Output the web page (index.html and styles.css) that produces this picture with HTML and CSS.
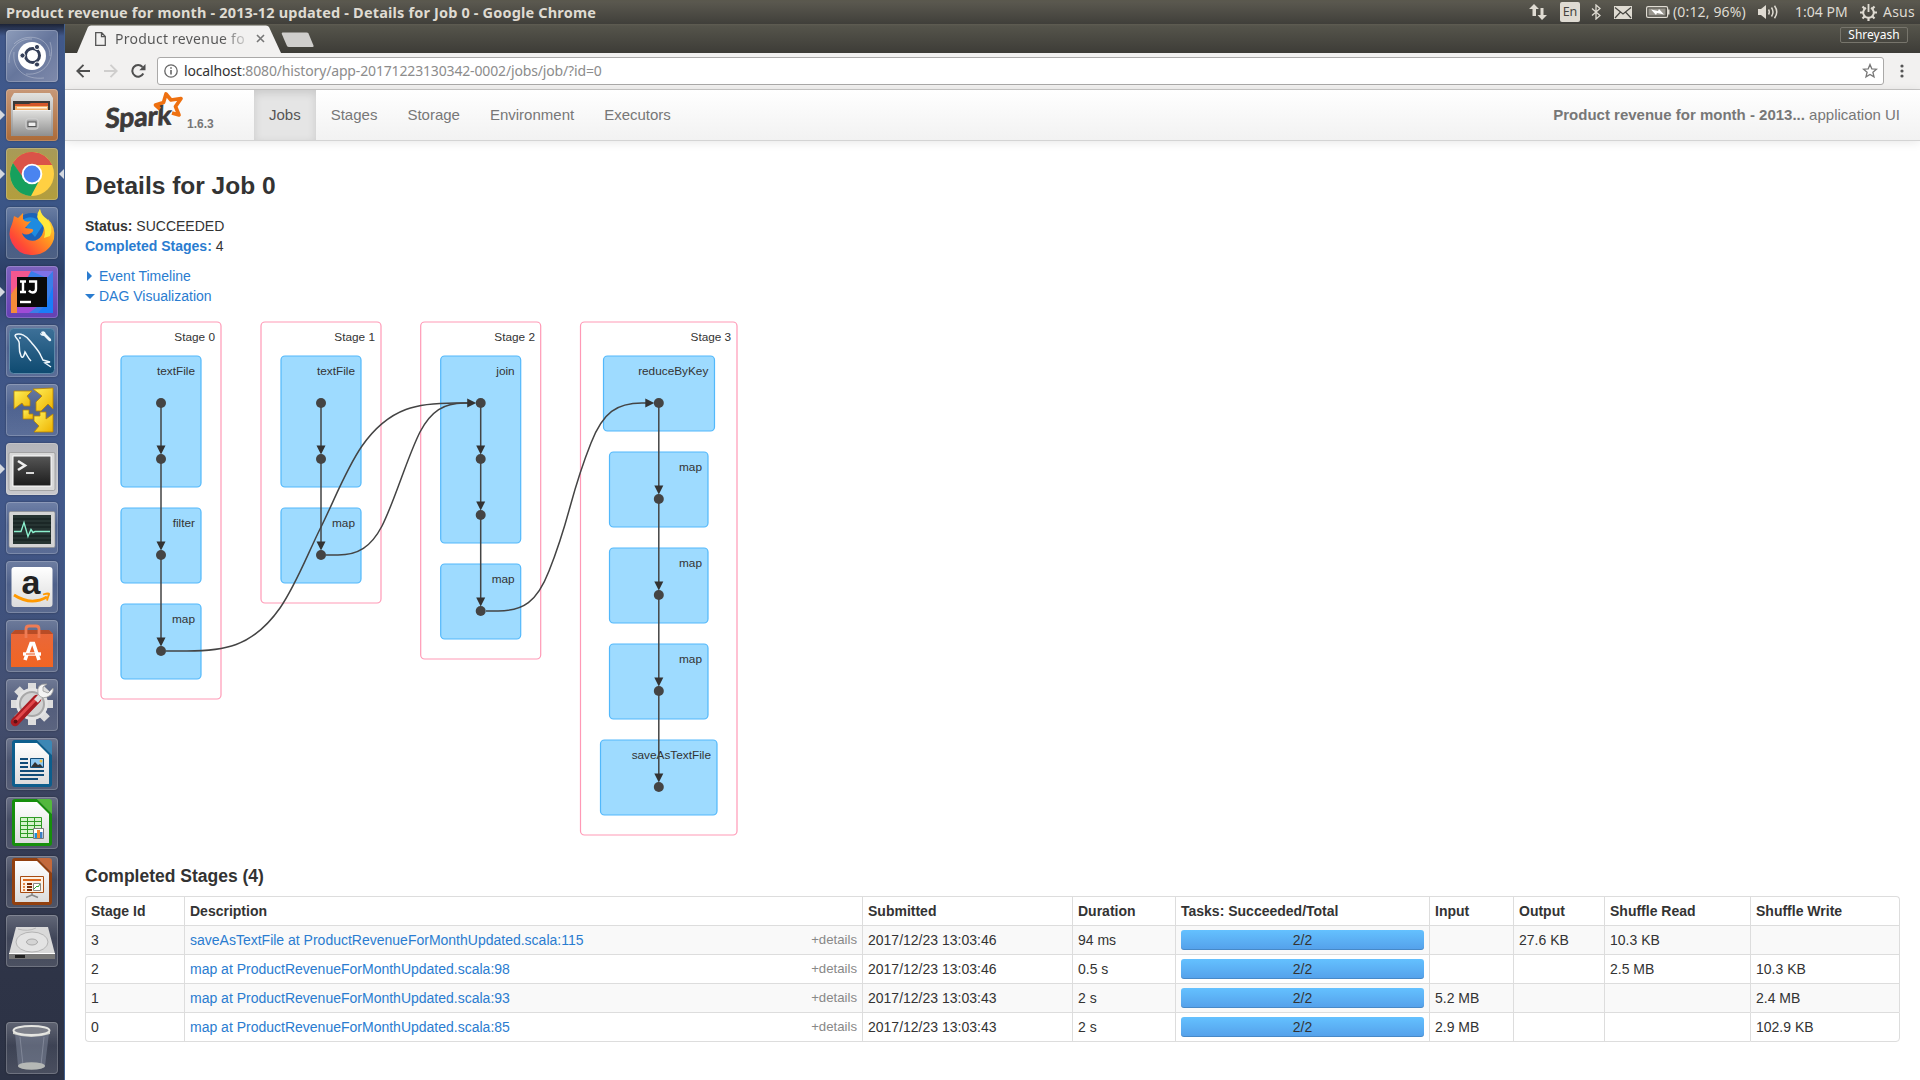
FILE: index.html
```html
<!DOCTYPE html>
<html lang="en">
<head>
<meta charset="utf-8">
<title>Product revenue for month - 2013-12 updated - Details for Job 0</title>
<link rel="stylesheet" href="styles.css">
</head>
<body>
<div class="desktop">
  <header class="panel">
    <span class="panel-title">Product revenue for month - 2013-12 updated - Details for Job 0 - Google Chrome</span>
    <div class="indicators">
      <svg class="ind-net" width="18" height="18" viewBox="0 0 18 18"><path d="M0 6 5 1l5 5H7v7H3.500V6zM8.500 12H11.500V5h3v7H18l-5 5z" fill="#dfdbd2"/></svg>
      <span class="ind-lang">En</span>
      <svg class="ind-bt" width="10" height="16" viewBox="0 0 10 16"><path d="M1 4.500 9 11.500 5 15V1l4 3.500-8 7" fill="none" stroke="#dfdbd2" stroke-width="1.300"/></svg>
      <svg class="ind-mail" width="18" height="13" viewBox="0 0 18 13"><rect width="18" height="13" fill="#dfdbd2"/><path d="M1 1.500 9 8l8-6.500M1 12l5.500-6M17 12l-5.500-6" fill="none" stroke="#45443f" stroke-width="1.200"/></svg>
      <svg class="ind-bat" width="24" height="12" viewBox="0 0 24 12"><rect x=".6" y=".6" width="21" height="10.800" rx="1.500" fill="none" stroke="#dfdbd2" stroke-width="1.200"/><rect x="2.500" y="2.500" width="17" height="7" fill="#98958d"/><path d="M22 3.500h1.500v5H22z" fill="#dfdbd2"/><path d="M5 3.500 12 5l1-2 5 5.500L11 7l-1 2z" fill="#fff"/></svg>
      <span class="ind-charge">(0:12, 96%)</span>
      <svg class="ind-vol" width="21" height="14" viewBox="0 0 21 14"><path d="M0 4h3l5-4v14l-5-4H0z" fill="#dfdbd2"/><path d="M10.500 4.500q1.500 2.500 0 5M13.500 2.500q3 4.500 0 9M16.500 .8q4.500 6.200 0 12.400" fill="none" stroke="#dfdbd2" stroke-width="1.500"/></svg>
      <span class="ind-time">1:04 PM</span>
      <svg class="ind-gear" width="17" height="17" viewBox="0 0 17 17"><g stroke="#dfdbd2" fill="none"><path d="M6 3.800a5.300 5.300 0 1 0 5 0" stroke-width="2"/><path d="M8.500 0v8" stroke-width="1.800"/><path d="M0 8.500h3M14 8.500h3M8.500 14v3M2.500 2.500l2 2M14.500 2.500l-2 2M2.500 14.500l2-2M14.500 14.500l-2-2" stroke-width="2.200"/></g></svg>
      <span class="ind-user">Asus</span>
    </div>
  </header>

  <div class="workspace">
    <nav class="launcher">
      <svg width="0" height="0" class="defs"><defs>
        <linearGradient id="gSteel" x2="0" y2="1"><stop stop-color="#e2e2e0"/><stop offset="1" stop-color="#8f8f8f"/></linearGradient>
        <linearGradient id="gPaper" x2="0" y2="1"><stop stop-color="#fff"/><stop offset="1" stop-color="#dcdcdc"/></linearGradient>
        <linearGradient id="gGold" x2="1" y2="1"><stop stop-color="#fff05a"/><stop offset="1" stop-color="#eeb200"/></linearGradient>
        <linearGradient id="gFox" x1="1" x2="0" y2="1"><stop stop-color="#fff04a"/><stop offset=".4" stop-color="#ff9a1f"/><stop offset=".75" stop-color="#ff4a35"/><stop offset="1" stop-color="#f0206a"/></linearGradient>
        <linearGradient id="gScreen" x2="0" y2="1"><stop stop-color="#555"/><stop offset="1" stop-color="#1d1d1d"/></linearGradient>
        <linearGradient id="gBag" x2="0" y2="1"><stop stop-color="#e8683c"/><stop offset="1" stop-color="#f26522"/></linearGradient>
        <linearGradient id="gSql" x2="0" y2="1"><stop stop-color="#3d7098"/><stop offset="1" stop-color="#0e4a70"/></linearGradient>
      </defs></svg>

      <div class="tile tile-dash"><svg viewBox="0 0 52 52"><g fill="none" stroke="#fff" stroke-opacity=".28"><path d="M8 14C20 2 44 6 44 26M44 12C50 30 38 46 20 44M38 48C20 50 6 40 8 22M3 33C2 18 14 8 26 9"/></g><circle cx="26" cy="26" r="14" fill="#fff"/><circle cx="26.500" cy="25.500" r="7" fill="none" stroke="#343f58" stroke-width="3"/><g fill="#343f58" stroke="#fff" stroke-width="1"><circle cx="16.500" cy="25.500" r="2.600"/><circle cx="31" cy="17" r="2.600"/><circle cx="31" cy="34.500" r="2.600"/></g></svg></div>

      <div class="tile tile-files running"><svg viewBox="0 0 52 52"><path d="M5 9 8 4h36l3 5v38H5z" fill="url(#gSteel)"/><path d="M7 12h37v10H7z" fill="#3b3a38"/><path d="M9 15h14l2-1h17v8H9z" fill="#d4572a"/><path d="M9 17h33v5H9z" fill="#f4b067"/><path d="M11 18h30v1.500H11z" fill="#fff1dc"/><path d="M7 21h38v26H7z" fill="url(#gSteel)"/><path d="M7 21.500h38" stroke="#efefef"/><rect x="20" y="30" width="12" height="10" rx="2" fill="#aaa" stroke="#d4d4d4"/><rect x="22" y="33" width="8" height="4.500" fill="#eee" stroke="#555"/></svg></div>

      <div class="tile tile-chrome running focused"><svg viewBox="0 0 52 52"><circle cx="26" cy="26" r="22" fill="#ffd042"/><path d="M26 26 7 15A22 22 0 0 1 46 17H26z" fill="#da5348"/><path d="M26 17h20A22 22 0 0 0 7 15l10 16z" fill="#da5348"/><path d="M7 15a22 22 0 0 0 18 33l9-17-16 0z" fill="#16a05d"/><circle cx="26" cy="26" r="10.300" fill="#fff"/><circle cx="26" cy="26" r="8.400" fill="#4a84f0"/></svg></div>

      <div class="tile"><svg viewBox="0 0 52 52"><circle cx="26" cy="24" r="18" fill="#1d63b8"/><path d="M15 14q12-9 22 4l-8 12z" fill="#1e8be0"/><path d="M34 2q-4 7 1 12 5 6 1 14-5 8-14 5-5-3-6-7 4 3 9 0 4-3 1-4l-7-1 6-7q-6 2-8-2V6l-5 5-4-2q-1 5-2 8Q1 27 6 36q7 13 21 12 16-1 21-16 2-12-6-20l-2 4Q34 8 34 2z" fill="url(#gFox)"/><path d="M34 2q-6 8 1 14 6 6 3 15l6-2q4-9-3-17Q35 8 34 2z" fill="#ffe93b"/></svg></div>

      <div class="tile tile-idea running"><svg viewBox="0 0 52 52"><path d="M5 5h42v42H5z" fill="#3a7ee8"/><path d="M5 5h20L11 31 5 27z" fill="#f4578f"/><path d="M5 28 11 20v27H5z" fill="#f58b3a"/><path d="M11 47V41h20l-8 6z" fill="#a04bd6"/><path d="M25 5h22L41 12z" fill="#7e72e8"/><path d="M47 20v27H32l9-10z" fill="#1a7df8"/><path d="M11 11h30v30H11z" fill="#0a0a0a"/><g fill="none" stroke="#fff" stroke-width="2.400"><path d="M14 15.500h6M17 15v11M14 26h6M23 15.500h7V23q0 3.500-3.500 3.500-2 0-3.500-2"/><path d="M14 36h11"/></g></svg></div>

      <div class="tile"><svg viewBox="0 0 52 52"><rect x="3.500" y="3.500" width="45" height="45" rx="4" fill="url(#gSql)" stroke="#5d88a8"/><g fill="none" stroke="#eef6fb" stroke-width="1.500"><path d="M9 10c5-3 12 1 16 7 4 5 8 9 10 14l2 4 7 2-5 1 6 4M9 10c0 3 3 4 4 7s-1 8 2 14q2 4 4-4c2 3 3 6 6 9"/></g><circle cx="14" cy="13" r=".9" fill="#fff"/><path d="M35 7q4-2 5 2l5 5q1 3-2 2l-5-5q-4 0-4-3l2 1z" fill="#eef6fb"/></svg></div>

      <div class="tile"><svg viewBox="0 0 52 52"><g fill="url(#gGold)" stroke="#b88300" stroke-width=".8"><path d="M8 7 26 7l-5 5 3 4v6h-6l-2-3-8 6z"/><path d="M27 5l20-1v21l-5-5-7 7h-5v-9l6-6z"/><path d="M17 26h6v4h4v5H17z"/><path d="M34 28h6v7l7-5v18H28l5-6-5-5v-5h6z"/></g></svg></div>

      <div class="tile tile-term running"><svg viewBox="0 0 52 52"><rect x="3" y="9.500" width="46" height="38" rx="1.500" fill="#d9d9d9" stroke="#888" stroke-width=".6"/><rect x="6.500" y="12.500" width="39" height="31" fill="#fff"/><rect x="7.500" y="13.500" width="37" height="29" fill="url(#gScreen)"/><path d="m12 18 7 4.500-7 4.500" fill="none" stroke="#eee" stroke-width="2.600"/><path d="M20 30h8" stroke="#eee" stroke-width="1.800"/></svg></div>

      <div class="tile"><svg viewBox="0 0 52 52"><rect x="3" y="9.500" width="46" height="36" rx="1.500" fill="#d4d4d4" stroke="#888" stroke-width=".6"/><rect x="7" y="13" width="38" height="29" fill="#263432"/><path d="M7 17h38M7 21h38M7 25h38M7 34h38M7 38h38" stroke="#111b1a"/><path d="M8 29.500h7l3-9 4 14 3-7 2 3 2-1h15" fill="none" stroke="#8bf0cd" stroke-width="1.400"/></svg></div>

      <div class="tile"><svg viewBox="0 0 52 52"><rect x="5.500" y="6" width="41" height="40" rx="3" fill="url(#gPaper)"/><text x="15.500" y="33" class="amazon-a">a</text><path d="M8 34q17 11 33 2" fill="none" stroke="#f90" stroke-width="2.800"/><path d="M37 33.500q7-2 6 0t-2 6" fill="none" stroke="#f90" stroke-width="1.800"/></svg></div>

      <div class="tile"><svg viewBox="0 0 52 52"><path d="M5 14 9 10h34l4 4v33H5z" fill="url(#gBag)"/><path d="M5 14 9 10h34l4 4z" fill="#b84c26"/><path d="M20 18V9q0-3 3-3h7q3 0 3 3v9" fill="none" stroke="#ee7c55" stroke-width="2.800"/><g stroke="#fff" fill="none"><path d="M19 40 25 23.500h2.500L33 40" stroke-width="3.600"/><path d="M17 34h18" stroke-width="3.400"/></g><path d="M20 34h9" stroke="#ee6a35" stroke-width="1.200"/></svg></div>

      <div class="tile"><svg viewBox="0 0 52 52"><g stroke="#ddd" stroke-width="8"><path d="M26 4v42M5 25h42M11 10l30 30M41 10 11 40"/></g><circle cx="26" cy="25" r="16" fill="#e4e4e4"/><circle cx="26" cy="25" r="12" fill="#d2d2d2" stroke="#a8a8a8" stroke-width="2"/><path d="m9 43 22-23" stroke="#a91c22" stroke-width="8.500" stroke-linecap="round"/><path d="m9 42 21-22" stroke="#e2484b" stroke-width="3" stroke-linecap="round"/><path d="m30 22 8-9" stroke="#ddd" stroke-width="5"/><path d="M41 5q-11-1-9 10 4 7 13 1 3-4 2-7l-5 5-5-2v-4z" fill="#f3f3f3" stroke="#999" stroke-width=".8"/><circle cx="9.500" cy="42.500" r="2" fill="#5d1013"/></svg></div>

      <div class="tile"><svg viewBox="0 0 52 52"><path d="M6 5q0-3 3-3h22l15 15v29q0 3-3 3H9q-3 0-3-3z" fill="#0d5e8d"/><path d="M31 2h12q3 0 3 3v12z" fill="#3c87b5"/><path d="M9 5h22l12 12v29H9z" fill="url(#gPaper)"/><path d="M14 21h8M14 25h8M14 29h8M14 33h24M14 37h24M14 41h18" stroke="#114c78" stroke-width="1.900"/><path d="M24.500 20.500h13v9h-13z" fill="#8fc8f0" stroke="#114c78"/><path d="m25 29 4-5 3 3 2-1 3 3z" fill="#333"/><circle cx="35" cy="23" r="1.500" fill="#f0c040"/></svg></div>

      <div class="tile"><svg viewBox="0 0 52 52"><path d="M6 5q0-3 3-3h22l15 15v29q0 3-3 3H9q-3 0-3-3z" fill="#168f0c"/><path d="M31 2h12q3 0 3 3v12z" fill="#53b83d"/><path d="M9 5h22l12 12v29H9z" fill="url(#gPaper)"/><path d="M14.500 20.500h21v20h-21zM14.500 24.500h21M14.500 28.500h21M14.500 32.500h21M14.500 36.500h21M21.500 20v20M28.500 20v20" fill="#d6f3cc" stroke="#2f9b25"/><path d="M27.500 31.500h10v10h-10z" fill="#fff" stroke="#777"/><path d="M28.500 36h2.500v5h-2.500z" fill="#1a8fd8"/><path d="M31 33h3v8h-3z" fill="#f28b2e"/><path d="M34 35h2.500v6H34z" fill="#3b7fc4"/></svg></div>

      <div class="tile"><svg viewBox="0 0 52 52"><path d="M6 5q0-3 3-3h22l15 15v29q0 3-3 3H9q-3 0-3-3z" fill="#92400f"/><path d="M31 2h12q3 0 3 3v12z" fill="#c4693b"/><path d="M9 5h22l12 12v29H9z" fill="url(#gPaper)"/><path d="M14.500 20.500h23v16h-23z" fill="#fdf1e4" stroke="#a84c12"/><path d="M17 24h18" stroke="#dc6a1e" stroke-width="2"/><path d="M17 28h2M17 31h2M17 34h2" stroke="#e48848" stroke-width="2"/><path d="M21 28h5M21 31h5M21 34h5" stroke="#7a2d06" stroke-width="2"/><path d="M27.500 27.500h7v7h-7z" fill="#fff" stroke="#888"/><path d="m28 33 3-3 1 1 2-3" stroke="#3a3" fill="none"/><path d="M26 37v2l-6 2.500M26 39l6 2.500" fill="none" stroke="#888" stroke-width="1.600"/></svg></div>

      <div class="tile"><svg viewBox="0 0 52 52"><path d="M10 12h32l7 27v5H3v-5z" fill="#d9d9d9"/><path d="M3 39h46v5H3z" fill="#777"/><path d="M3 38.500h46" stroke="#fff"/><path d="M9 40h10v3H9z" fill="#222"/><ellipse cx="26" cy="27" rx="16" ry="10" fill="#e3e3e3" stroke="#b4b4b4"/><ellipse cx="26" cy="27" rx="5.500" ry="3" fill="#d4d4d4" stroke="#aaa"/><path d="M12 14q10 3 18-1" fill="none" stroke="#b8b8b8"/></svg></div>

      <div class="tile tile-trash"><svg viewBox="0 0 52 52"><path d="M9 11h34l-4 33q-13 5-27 0z" fill="#8a93a6" fill-opacity=".45"/><path d="M14 15l3 28M38 15l-3 28" stroke="#aeb5c2" stroke-opacity=".4"/><ellipse cx="25.500" cy="44" rx="13.500" ry="3.800" fill="#b5b8b6"/><path d="M7 8v4q18 6 37 0V8z" fill="#cfd0cb"/><ellipse cx="25.500" cy="8.500" rx="18" ry="4.500" fill="#7d808a" stroke="#e6e6e2" stroke-width="2"/></svg></div>
    </nav>

    <div class="browser">
      <div class="tabstrip">
        <svg class="tab-shape" width="240" height="28" viewBox="0 0 240 28"><path d="M12 28 23 2q1-1.500 3-1.500h175q2 0 3 1.500l12 26z" fill="#f2f1f0"/></svg>
        <svg class="tab-new" width="34" height="16" viewBox="0 0 34 16"><path d="M1.500.5h24q1.500 0 2 1l5 12q.5 1.500-1 1.500H8q-1.500 0-2-1L.8 2Q.3.500 1.500.5z" fill="#cfcecc"/></svg>
        <div class="tab-content">
          <svg width="11" height="14" viewBox="0 0 11 14"><path d="M.7.7h6l3.600 3.800v8.800H.7zM6.500.7v4h4" fill="none" stroke="#555" stroke-width="1.300"/></svg>
          <span class="tab-title">Product revenue fo</span>
          <svg class="tab-close" width="9" height="9" viewBox="0 0 9 9"><path d="m1 1 7 7M8 1 1 8" stroke="#777" stroke-width="1.600"/></svg>
        </div>
        <span class="profile">Shreyash</span>
      </div>
      <div class="toolbar">
        <svg width="14" height="14" viewBox="0 0 14 14"><path d="M7.500.8 1.300 7l6.200 6.200M1.500 7H14" fill="none" stroke="#4f4f4f" stroke-width="1.900"/></svg>
        <svg class="tb-fwd" width="14" height="14" viewBox="0 0 14 14"><path d="M6.500.8 12.700 7l-6.200 6.200M12.500 7H0" fill="none" stroke="#cfcecd" stroke-width="1.900"/></svg>
        <svg class="tb-reload" width="15" height="14" viewBox="0 0 15 14"><path d="M12.300 9.500A5.800 5.800 0 1 1 11.500 3" fill="none" stroke="#4f4f4f" stroke-width="2"/><path d="M14.500 0v6.200H8.300z" fill="#4f4f4f"/></svg>
        <div class="omnibox">
          <svg width="14" height="14" viewBox="0 0 14 14"><circle cx="7" cy="7" r="6.200" fill="none" stroke="#666" stroke-width="1.300"/><path d="M7 6v4.500M7 3.300v1.500" stroke="#666" stroke-width="1.600"/></svg>
          <span class="url">localhost<span class="url-rest">:8080/history/app-20171223130342-0002/jobs/job/?id=0</span></span>
          <svg class="star" width="16" height="16" viewBox="0 0 16 16"><path d="m8 1.500 1.800 4.300 4.700.4-3.600 3 1.100 4.600L8 11.400l-4 2.400 1.100-4.600-3.600-3 4.700-.4z" fill="none" stroke="#777" stroke-width="1.300"/></svg>
        </div>
        <svg class="tb-menu" width="4" height="14" viewBox="0 0 4 14"><g fill="#555"><circle cx="2" cy="2" r="1.600"/><circle cx="2" cy="7" r="1.600"/><circle cx="2" cy="12" r="1.600"/></g></svg>
      </div>

      <main class="page">
        <div class="navbar">
          <div class="brand">
            <svg class="logo" width="79" height="48" viewBox="0 0 79 48"><text class="spark-word" transform="translate(1 37) rotate(-3) skewX(-6)" textLength="66" lengthAdjust="spacingAndGlyphs">Spark</text><path d="M56 18 51.500 14l8-2.500L62 3l5 6 10-1.500-5.500 8L75 24l-7-2" fill="none" stroke="#ee7010" stroke-width="3.700" stroke-linejoin="round"/></svg>
            <span class="version">1.6.3</span>
          </div>
          <ul class="nav">
            <li class="active">Jobs</li><li>Stages</li><li>Storage</li><li>Environment</li><li>Executors</li>
          </ul>
          <p class="app-name"><strong>Product revenue for month - 2013...</strong> application UI</p>
        </div>

        <div class="content">
          <h3>Details for Job 0</h3>
          <ul class="summary">
            <li><strong>Status:</strong> SUCCEEDED</li>
            <li><a><strong>Completed Stages:</strong></a> 4</li>
          </ul>
          <div class="toggle"><span class="arrow-closed"></span><a>Event Timeline</a></div>
          <div class="toggle"><span class="arrow-open"></span><a>DAG Visualization</a></div>

          <svg class="dag" width="680" height="535" viewBox="85 312 680 535">
            <g class="stage">
              <rect x="101" y="322" width="120" height="377" rx="4"/>
              <rect x="261" y="322" width="120" height="281" rx="4"/>
              <rect x="420.700" y="322" width="120" height="337" rx="4"/>
              <rect x="580.500" y="322" width="156.500" height="513" rx="4"/>
            </g>
            <g class="rdd">
              <rect x="121" y="356" width="80" height="131" rx="4"/>
              <rect x="121" y="508" width="80" height="75" rx="4"/>
              <rect x="121" y="604" width="80" height="75" rx="4"/>
              <rect x="281" y="356" width="80" height="131" rx="4"/>
              <rect x="281" y="508" width="80" height="75" rx="4"/>
              <rect x="440.700" y="356" width="80" height="187" rx="4"/>
              <rect x="440.700" y="564" width="80" height="75" rx="4"/>
              <rect x="603.500" y="356" width="111" height="75" rx="4"/>
              <rect x="609.500" y="452" width="98.500" height="75" rx="4"/>
              <rect x="609.500" y="548" width="98.500" height="75" rx="4"/>
              <rect x="609.500" y="644" width="98.500" height="75" rx="4"/>
              <rect x="600.500" y="740" width="116.500" height="75" rx="4"/>
            </g>
            <g class="label">
              <text x="215" y="341">Stage 0</text><text x="375" y="341">Stage 1</text><text x="535" y="341">Stage 2</text><text x="731.200" y="341">Stage 3</text>
              <text x="195" y="375">textFile</text><text x="195" y="527">filter</text><text x="195" y="623">map</text>
              <text x="355" y="375">textFile</text><text x="355" y="527">map</text>
              <text x="514.700" y="375">join</text><text x="514.700" y="583">map</text>
              <text x="708.300" y="375">reduceByKey</text><text x="702" y="471">map</text><text x="702" y="567">map</text><text x="702" y="663">map</text><text x="711" y="759">saveAsTextFile</text>
            </g>
            <g class="dot">
              <circle cx="161" cy="403" r="5"/><circle cx="161" cy="459" r="5"/><circle cx="161" cy="555" r="5"/><circle cx="161" cy="651" r="5"/>
              <circle cx="321" cy="403" r="5"/><circle cx="321" cy="459" r="5"/><circle cx="321" cy="555" r="5"/>
              <circle cx="480.700" cy="403" r="5"/><circle cx="480.700" cy="459" r="5"/><circle cx="480.700" cy="515" r="5"/><circle cx="480.700" cy="611" r="5"/>
              <circle cx="658.800" cy="403" r="5"/><circle cx="658.800" cy="499" r="5"/><circle cx="658.800" cy="595" r="5"/><circle cx="658.800" cy="691" r="5"/><circle cx="658.800" cy="787" r="5"/>
            </g>
            <g class="edge">
              <path d="M161 403V451M161 459V547M161 555V643M321 403V451M321 459V547M480.700 403V451M480.700 459V507M480.700 515V603M658.800 403V491M658.800 499V587M658.800 595V683M658.800 691V779"/>
              <path d="M166 651H187C222 651 252 648 280 608C296 585 308 553 321 527C334 501 346 469 362 446C390 406 420 403 455 403H470"/>
              <path d="M326 555H338C358 555 371 547 382 526C389 512 395 495 401 479C407 463 413 446 420 432C431 411 444 403 464 403H470"/>
              <path d="M486 611H498C523 611 537 602 549 571C557 551 564 529 570 507C576 485 583 463 591 443C603 412 617 403 642 403H648"/>
            </g>
            <path class="head" d="M156.500 445.500h9l-4.500 9zM156.500 541.500h9l-4.500 9zM156.500 637.500h9l-4.500 9zM316.500 445.500h9l-4.500 9zM316.500 541.500h9l-4.500 9zM476.200 445.500h9l-4.500 9zM476.200 501.500h9l-4.500 9zM476.200 597.500h9l-4.500 9zM654.300 485.500h9l-4.500 9zM654.300 581.500h9l-4.500 9zM654.300 677.500h9l-4.500 9zM654.300 773.500h9l-4.500 9zM467.200 398.500v9l9-4.500zM645.300 398.500v9l9-4.500z"/>
          </svg>

          <h4>Completed Stages (4)</h4>
          <table class="stages">
            <colgroup><col class="c-id"><col class="c-desc"><col class="c-sub"><col class="c-dur"><col class="c-tasks"><col class="c-in"><col class="c-out"><col class="c-read"><col class="c-write"></colgroup>
            <thead><tr><th>Stage Id</th><th>Description</th><th>Submitted</th><th>Duration</th><th>Tasks: Succeeded/Total</th><th>Input</th><th>Output</th><th>Shuffle Read</th><th>Shuffle Write</th></tr></thead>
            <tbody>
              <tr><td>3</td><td><div class="desc"><a>saveAsTextFile at ProductRevenueForMonthUpdated.scala:115</a><span>+details</span></div></td><td>2017/12/23 13:03:46</td><td>94 ms</td><td><div class="progress">2/2</div></td><td></td><td>27.6 KB</td><td>10.3 KB</td><td></td></tr>
              <tr><td>2</td><td><div class="desc"><a>map at ProductRevenueForMonthUpdated.scala:98</a><span>+details</span></div></td><td>2017/12/23 13:03:46</td><td>0.5 s</td><td><div class="progress">2/2</div></td><td></td><td></td><td>2.5 MB</td><td>10.3 KB</td></tr>
              <tr><td>1</td><td><div class="desc"><a>map at ProductRevenueForMonthUpdated.scala:93</a><span>+details</span></div></td><td>2017/12/23 13:03:43</td><td>2 s</td><td><div class="progress">2/2</div></td><td>5.2 MB</td><td></td><td></td><td>2.4 MB</td></tr>
              <tr><td>0</td><td><div class="desc"><a>map at ProductRevenueForMonthUpdated.scala:85</a><span>+details</span></div></td><td>2017/12/23 13:03:43</td><td>2 s</td><td><div class="progress">2/2</div></td><td>2.9 MB</td><td></td><td></td><td>102.9 KB</td></tr>
            </tbody>
          </table>
        </div>
      </main>
    </div>
  </div>
</div>
</body>
</html>
```
FILE: styles.css
```css
* { box-sizing: border-box; }
body { margin: 0; overflow: hidden; font-family: "Liberation Sans", Arial, sans-serif; font-size: 14px; line-height: 20px; color: #333; }
ul, p, h3, h4 { margin: 0; padding: 0; }
ul { list-style: none; }
svg { display: block; flex: none; }
a { color: #2a7cd0; }

.desktop { width: 1920px; height: 1080px; display: flex; flex-direction: column; }

/* top panel */
.panel { height: 24px; flex: none; display: flex; align-items: center; justify-content: space-between; padding: 0 5px 0 6px; background: linear-gradient(#5a584d, #5a584f 2px, #403f3a); color: #dfdbd2; font-family: "Noto Sans", sans-serif; font-size: 15px; line-height: 24px; white-space: nowrap; }
.panel-title { font-weight: 700; font-size: 14.5px; letter-spacing: .165px; }
.indicators { display: flex; align-items: center; }
.ind-lang { width: 20px; height: 20px; margin: 0 11px 0 13px; border-radius: 2px; background: #dfdbd2; color: #45443f; font-size: 12.5px; line-height: 20px; text-align: center; }
.ind-mail { margin: 0 14px 0 13px; }
.ind-charge { width: 73px; margin: 0 12px 0 3px; font-size: 14px; letter-spacing: .15px; }
.ind-vol { margin-right: 16px; }
.ind-time { width: 52px; margin-right: 13px; font-size: 14px; }
.ind-gear { margin-right: 6px; }
.ind-user { width: 32px; font-size: 14px; letter-spacing: .2px; }

.workspace { flex: 1; min-height: 0; display: flex; }

/* launcher */
.launcher { width: 65px; flex: none; display: flex; flex-direction: column; align-items: center; gap: 7px; padding-top: 6px; padding-right: 1px; border-right: 1px solid #42608f; background: linear-gradient(#1c2336, #41588a 12px, #3e598c 110px, #3a5484 200px, #2c3f66 250px, #3f5585 310px, #42588a 480px, #3f527e 580px, #444f70 680px, #353c55 820px, #2e3447 950px, #2c3245); }
.defs { position: absolute; }
.tile { position: relative; width: 52px; height: 52px; flex: none; border-radius: 4px; background: linear-gradient(rgba(255,255,255,.24), rgba(255,255,255,.08) 45%, rgba(255,255,255,.14)); box-shadow: inset 0 0 0 1px rgba(255,255,255,.2), 0 0 2px rgba(0,0,0,.4); }
.tile svg { width: 52px; height: 52px; }
.tile-dash { background: linear-gradient(135deg, #8d9cba, #66769c 50%, #7f8aab); }
.tile-files { background: linear-gradient(#c79878, #ac6b38); }
.tile-chrome { background: linear-gradient(#a89a58, #b39e3d); }
.tile-idea { background: linear-gradient(#7c62bd, #6440b4); }
.tile-term { background: linear-gradient(#b4b5ba, #c8c8cc); }
.tile-trash { margin-top: auto; margin-bottom: 6px; }
.running::before { content: ""; position: absolute; left: -6px; top: 21px; border: 5px solid transparent; border-left-color: #d5d9e0; border-right: 0; }
.focused::after { content: ""; position: absolute; right: -6px; top: 21px; border: 5px solid transparent; border-right-color: #d5d9e0; border-left: 0; }
.amazon-a { font: 700 34px "Liberation Sans", sans-serif; fill: #222; }

/* browser chrome */
.browser { flex: 1; min-width: 0; display: flex; flex-direction: column; background: #fff; }
.tabstrip { position: relative; height: 29px; flex: none; display: flex; justify-content: space-between; background: linear-gradient(#5f5d52, #55544b 2px, #3d3c37); font-family: "Noto Sans", sans-serif; }
.tab-shape { position: absolute; left: 0; top: 1px; }
.tab-new { position: absolute; left: 216px; top: 8px; }
.tab-content { position: relative; display: flex; align-items: center; height: 29px; padding-left: 30px; }
.tab-title { width: 134px; margin: 0 7px 0 9px; overflow: hidden; white-space: nowrap; font-size: 14px; letter-spacing: .25px; color: transparent; background: linear-gradient(90deg, #555 80%, #e2e1e0 100%); -webkit-background-clip: text; background-clip: text; }
.profile { width: 68px; height: 16px; margin: 3px 12px 0 0; border: 1px solid #77756c; border-radius: 2px; font-size: 12px; line-height: 14px; text-align: center; color: #fff; }
.toolbar { height: 37px; flex: none; display: flex; align-items: center; padding: 0 16px 0 11px; background: #f2f1f0; border-bottom: 1px solid #c9c8c7; font-family: "Noto Sans", sans-serif; }
.tb-fwd { margin: 0 13px 0 14px; }
.tb-reload { margin-right: 11px; }
.omnibox { flex: 1; height: 28px; display: flex; align-items: center; padding: 0 5px 0 6px; border: 1px solid #aaa9a8; border-radius: 3px; background: #fff; }
.url { margin-left: 6px; font-size: 14px; letter-spacing: -.155px; color: #333; white-space: nowrap; }
.url-rest { color: #8c8c8c; }
.star { margin-left: auto; }
.tb-menu { margin-left: 16px; }

/* navbar */
.navbar { height: 51px; display: flex; background: linear-gradient(#fff, #f2f2f2); border-bottom: 1px solid #d4d4d4; box-shadow: 0 1px 10px rgba(0,0,0,.1); font-size: 15px; color: #777; }
.brand { width: 189px; padding: 1px 0 0 39px; display: flex; }
.version { margin: 23px 0 0 4px; font-size: 12px; font-weight: 700; }
.logo { overflow: visible; }
.spark-word { font: 700 27px Lato, sans-serif; fill: #3c3a3a; stroke: #3c3a3a; stroke-width: .8px; }
.nav { display: flex; }
.nav li { padding: 15px 15px 14px; }
.nav .active { color: #555; background: #e5e5e5; box-shadow: inset 0 3px 8px rgba(0,0,0,.125); }
.app-name { margin-left: auto; padding: 15px 20px 0 0; }

/* job details */
.content { padding: 25px 20px 0; }
h3 { font-size: 24.5px; line-height: 40px; }
h4 { margin-top: 19px; font-size: 17.5px; line-height: 20px; }
.summary { margin: 10px 0; }
.toggle { display: flex; align-items: center; }
.arrow-closed, .arrow-open { width: 14px; }
.arrow-closed::before { content: ""; display: block; width: 0; margin-left: 2px; border: 5px solid transparent; border-left-color: #2a7cd0; border-right: 0; }
.arrow-open::before { content: ""; display: block; width: 0; border: 5px solid transparent; border-top-color: #2a7cd0; border-bottom: 0; }
.dag { margin-top: 6px; }
.stage rect { fill: none; stroke: #ff99b6; stroke-width: 1.2px; }
.rdd rect { fill: #9edbff; stroke: #52b8fb; stroke-width: 1.2px; }
.label text { font-size: 11.8px; text-anchor: end; fill: #333; }
.dot circle { fill: #444; }
.edge path { fill: none; stroke: #444; stroke-width: 1.5px; }
.head { fill: #333; }

.stages { width: 1815px; margin-top: 10px; table-layout: fixed; border-collapse: separate; border-spacing: 0; }
.c-id { width: 99px; } .c-desc { width: 678px; } .c-sub { width: 210px; } .c-dur { width: 103px; } .c-tasks { width: 254px; } .c-in { width: 84px; } .c-out { width: 91px; } .c-read { width: 146px; } .c-write { width: 150px; }
th, td { height: 29px; padding: 4px 5px; border: 1px solid #ddd; border-right-width: 0; border-bottom-width: 0; text-align: left; white-space: nowrap; }
tr > :last-child { border-right-width: 1px; }
tbody tr:last-child td { height: 30px; border-bottom-width: 1px; }
tbody tr:nth-child(odd) td { background: #f9f9f9; }
thead th:first-child { border-top-left-radius: 4px; }
thead th:last-child { border-top-right-radius: 4px; }
tbody tr:last-child td:first-child { border-bottom-left-radius: 4px; }
tbody tr:last-child td:last-child { border-bottom-right-radius: 4px; }
.desc { display: flex; justify-content: space-between; }
.desc span { font-size: 13.2px; color: #888; }
.progress { height: 20px; border-radius: 3px; text-align: center; background: linear-gradient(#64c1ff, #54a0ea); box-shadow: inset 0 -1px 0 rgba(0,0,0,.15); }
```
